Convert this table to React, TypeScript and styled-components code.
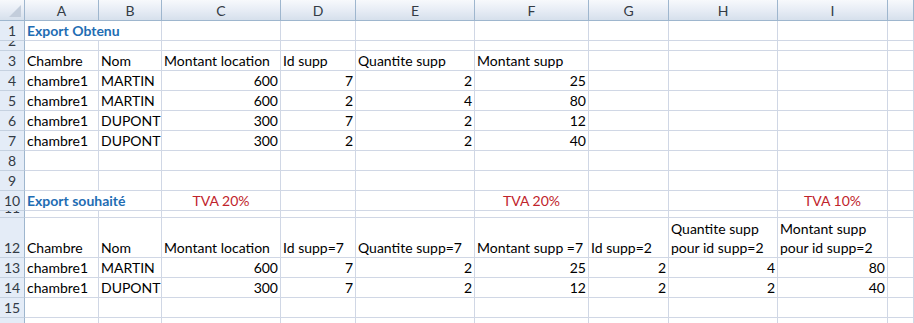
import React from "react";
import styled, { createGlobalStyle, css } from "styled-components";

const GlobalStyle = createGlobalStyle`
  html, body {
    margin: 0;
    padding: 0;
    background: #ffffff;
    overflow: hidden;
  }
`;

type Align = "left" | "right" | "center";
type Tone = "plain" | "title" | "vat";

interface CellData {
  v?: string;
  align?: Align;
  tone?: Tone;
  span?: number;
}

interface RowData {
  n: number;
  h: number;
  cells: (CellData | null)[];
}

const GRID = "#d0d7e5";
const HEAD_LINE = "#9eb6ce";

const COLUMNS = ["A", "B", "C", "D", "E", "F", "G", "H", "I", ""];
const WIDTHS = [74, 63, 119, 75, 119, 114, 80, 109, 110, 26];

const txt = (v: string): CellData => ({ v });
const num = (v: string | number): CellData => ({ v: String(v), align: "right" });
const vat = (v: string): CellData => ({ v, align: "center", tone: "vat" });

const ROWS: RowData[] = [
  { n: 1, h: 20, cells: [{ v: "Export Obtenu", tone: "title", span: 2 }] },
  { n: 2, h: 10, cells: [] },
  {
    n: 3,
    h: 20,
    cells: ["Chambre", "Nom", "Montant location", "Id supp", "Quantite supp", "Montant supp"].map(txt),
  },
  { n: 4, h: 20, cells: [txt("chambre1"), txt("MARTIN"), num(600), num(7), num(2), num(25)] },
  { n: 5, h: 20, cells: [txt("chambre1"), txt("MARTIN"), num(600), num(2), num(4), num(80)] },
  { n: 6, h: 20, cells: [txt("chambre1"), txt("DUPONT"), num(300), num(7), num(2), num(12)] },
  { n: 7, h: 20, cells: [txt("chambre1"), txt("DUPONT"), num(300), num(2), num(2), num(40)] },
  { n: 8, h: 20, cells: [] },
  { n: 9, h: 20, cells: [] },
  {
    n: 10,
    h: 20,
    cells: [
      { v: "Export souhaité", tone: "title", span: 2 },
      null,
      vat("TVA 20%"),
      null,
      null,
      vat("TVA 20%"),
      null,
      null,
      vat("TVA 10%"),
    ],
  },
  { n: 11, h: 7, cells: [] },
  {
    n: 12,
    h: 40,
    cells: [
      "Chambre",
      "Nom",
      "Montant location",
      "Id supp=7",
      "Quantite supp=7",
      "Montant supp =7",
      "Id supp=2",
      "Quantite supp\npour id supp=2",
      "Montant supp\npour id supp=2",
    ].map(txt),
  },
  {
    n: 13,
    h: 20,
    cells: [txt("chambre1"), txt("MARTIN"), num(600), num(7), num(2), num(25), num(2), num(4), num(80)],
  },
  {
    n: 14,
    h: 20,
    cells: [txt("chambre1"), txt("DUPONT"), num(300), num(7), num(2), num(12), num(2), num(2), num(40)],
  },
  { n: 15, h: 20, cells: [] },
  // only the top few pixels of this one fit in the window
  { n: 16, h: 20, cells: [] },
];

const Sheet = styled.div`
  display: grid;
  grid-template-columns: 25px ${WIDTHS.map((w) => `${w}px`).join(" ")};
  grid-template-rows: 21px ${ROWS.map((r) => `${r.h}px`).join(" ")};
  width: 914px;
  height: 323px;
  overflow: hidden;
  font-family: Lato, "Liberation Sans", sans-serif;
  font-size: 14px;
  color: #000000;
`;

const headGradient = css`
  background: linear-gradient(to bottom, #f7f9fc 0%, #e9eef6 45%, #d6e0ec 100%);
`;

const Corner = styled.div`
  ${headGradient};
  position: relative;
  box-sizing: border-box;
  border-right: 1px solid ${HEAD_LINE};
  border-bottom: 1px solid ${HEAD_LINE};

  /* the select-all triangle */
  &::after {
    content: "";
    position: absolute;
    right: 3px;
    bottom: 3px;
    border-style: solid;
    border-width: 0 0 12px 12px;
    border-color: transparent transparent #c3cddb transparent;
  }
`;

const ColHead = styled.div`
  ${headGradient};
  box-sizing: border-box;
  border-right: 1px solid ${HEAD_LINE};
  border-bottom: 1px solid ${HEAD_LINE};
  display: flex;
  align-items: center;
  justify-content: center;
  color: #333b45;
  line-height: 19px;
`;

const RowHead = styled.div`
  background: #e4ecf7;
  box-sizing: border-box;
  border-right: 1px solid ${HEAD_LINE};
  border-bottom: 1px solid #c5d1e0;
  display: flex;
  align-items: flex-end;
  justify-content: center;
  overflow: hidden;
  color: #333b45;
  line-height: 19px;
`;

const Cell = styled.div<{ $align: Align; $tone: Tone; $span: number }>`
  grid-column: span ${(p) => p.$span};
  box-sizing: border-box;
  border-right: 1px solid ${GRID};
  border-bottom: 1px solid ${GRID};
  display: flex;
  align-items: flex-end;
  justify-content: ${(p) =>
    p.$align === "right" ? "flex-end" : p.$align === "center" ? "center" : "flex-start"};
  padding: 0 2px 0 2px;
  overflow: hidden;
  line-height: 19px;
  color: ${(p) => (p.$tone === "title" ? "#1f6db3" : p.$tone === "vat" ? "#c0232b" : "#000000")};
  font-weight: ${(p) => (p.$tone === "title" ? 700 : 400)};
`;

const CellText = styled.span`
  display: block;
  white-space: pre;
`;

function renderRow(row: RowData) {
  const out: React.ReactNode[] = [<RowHead key={`h${row.n}`}>{row.n}</RowHead>];
  let col = 0;
  while (col < COLUMNS.length) {
    const c = row.cells[col] ?? {};
    const span = c.span ?? 1;
    out.push(
      <Cell key={`${row.n}-${col}`} $align={c.align ?? "left"} $tone={c.tone ?? "plain"} $span={span}>
        {c.v ? <CellText>{c.v}</CellText> : null}
      </Cell>
    );
    col += span;
  }
  return out;
}

export default function App() {
  return (
    <>
      <GlobalStyle />
      <Sheet>
        <Corner />
        {COLUMNS.map((c, i) => (
          <ColHead key={`c${i}`}>{c}</ColHead>
        ))}
        {ROWS.map(renderRow)}
      </Sheet>
    </>
  );
}
